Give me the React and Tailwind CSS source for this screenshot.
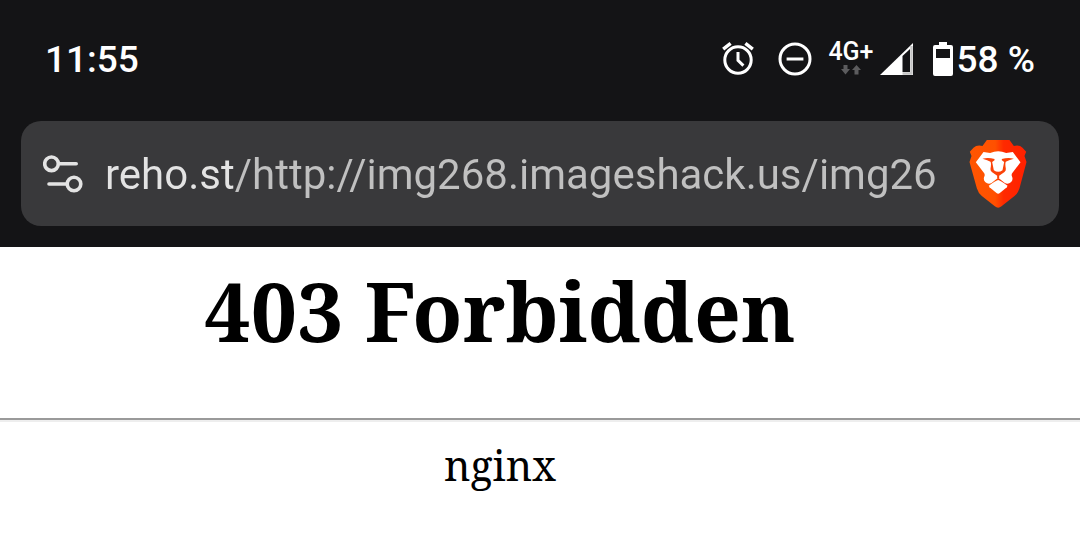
import { useState } from "react";

function AlarmIcon() {
  return (
    <svg className="w-8 h-[34px]" viewBox="0 0 32 34" fill="none" stroke="white">
      <circle cx="16" cy="18" r="13.2" strokeWidth="3" />
      <path d="M1.2 7.2L8.6 1.4M30.8 7.2L23.4 1.4" strokeWidth="3.4" />
      <path d="M16 10V18.4L21.4 23.6" strokeWidth="3" />
    </svg>
  );
}

function DoNotDisturbIcon() {
  return (
    <svg className="w-[34px] h-[34px]" viewBox="0 0 34 34" fill="none" stroke="white" strokeWidth="3">
      <circle cx="17" cy="17" r="15" />
      <path d="M8.6 17H25.4" />
    </svg>
  );
}

function DataArrowsIcon() {
  return (
    <svg className="w-5 h-[10px]" viewBox="0 0 20 10" fill="#5c5c5e">
      <path d="M2.5 0H6.5V4H9L4.5 9.5L0 4H2.5Z" />
      <path d="M13.5 9.5H17.5V5H20L15.5 0L11 5H13.5Z" />
    </svg>
  );
}

function SignalIcon() {
  return (
    <svg className="w-[33px] h-8" viewBox="0 0 33 32">
      <path d="M0 32L33 0V32Z" fill="white" />
      <path d="M22.5 13L30 6V29H22.5Z" fill="#141416" />
      <path d="M31.5 3V30.5H22.5" fill="none" stroke="#c4c4c4" strokeWidth="2.4" />
    </svg>
  );
}

function BatteryIcon() {
  return (
    <svg className="w-5 h-[34px]" viewBox="0 0 20 34">
      <path d="M6 0H14V3H18Q20 3 20 5V32Q20 34 18 34H2Q0 34 0 32V5Q0 3 2 3H6Z" fill="white" />
      <path d="M3 7H17V16H3Z" fill="#141416" />
    </svg>
  );
}

function TuneIcon() {
  return (
    <svg className="w-10 h-[38px]" viewBox="0 0 40 38" fill="none" stroke="#e3e3e3" strokeWidth="3.6" strokeLinecap="round">
      <circle cx="8.5" cy="8.8" r="6.8" />
      <path d="M16 8.8H33.2" />
      <circle cx="31" cy="29" r="6.8" />
      <path d="M6 29H23.5" />
    </svg>
  );
}

function BraveLogo() {
  return (
    <svg className="w-[58px] h-[68px]" viewBox="87 90 173 204">
      <defs>
        <linearGradient id="shield" x1="0" x2="1" y1="0" y2="0">
          <stop offset="0" stopColor="#ff5601" />
          <stop offset="0.45" stopColor="#ff5000" />
          <stop offset="0.6" stopColor="#ff2a00" />
          <stop offset="1" stopColor="#ff2000" />
        </linearGradient>
      </defs>
      <path
        d="M140 90H208L221 108Q238 104 247 113L258 125L253 138L259 156L238 235Q234 249 223 258L184 289Q174 297 164 289L125 258Q114 249 110 235L88 156L94 138L89 125L100 113Q110 104 127 108Z"
        fill="url(#shield)"
      />
      {/* mane and muzzle */}
      <path
        d="M130 126L150 129Q174 118 198 129L218 126L241 157L217 188Q213 193 215 198Q220 209 213 216Q204 224 194 219L174 203L154 219Q144 224 135 216Q128 209 133 198Q135 193 131 188L107 157Z"
        fill="white"
      />
      {/* eyes and the sides of the nose */}
      <path
        d="M127 146Q144 141 163 147L163 151L156 156L161 181Q174 190 187 181L192 156L185 151L185 147Q204 141 221 146L207 151L197 155Q194 160 197 176Q198 182 193 186L177 197V205H171V197L155 186Q150 182 151 176Q154 160 151 155L141 151Z"
        fill="#fa4208"
      />
      {/* chin */}
      <path d="M174 210Q180 211 200 226Q203 229 200 232L179 249Q174 253 169 249L148 232Q145 229 148 226Q168 211 174 210Z" fill="white" />
    </svg>
  );
}

export default function App() {
  const [url, setUrl] = useState("reho.st/http://img268.imageshack.us/img26");

  return (
    <div className="min-h-screen bg-white">
      <header className="bg-[#141416] px-[21px] pb-[21px] font-[Roboto,sans-serif] text-white">
        {/* Status bar */}
        <div className="flex h-[121px] items-center justify-between pb-1 px-6 text-[37px] font-medium">
          <time className="pt-0.5">11:55</time>
          <div className="flex items-center">
            <AlarmIcon />
            <div className="ml-6">
              <DoNotDisturbIcon />
            </div>
            <div className="ml-4 flex flex-col items-center pb-1">
              <span className="text-[25px] leading-[26px]">4G+</span>
              <DataArrowsIcon />
            </div>
            <div className="ml-1.5">
              <SignalIcon />
            </div>
            <div className="ml-5 mr-1">
              <BatteryIcon />
            </div>
            <span className="pt-0.5">58 %</span>
          </div>
        </div>

        {/* Address bar */}
        <div className="flex h-[105px] items-center rounded-[20px] bg-[#39393b] pl-[22px] pr-8">
          <button aria-label="Site settings">
            <TuneIcon />
          </button>
          <input
            type="text"
            aria-label="Address"
            value={url}
            onChange={(e) => setUrl(e.target.value)}
            className="ml-[22px] mr-6 min-w-0 flex-1 bg-linear-to-r from-[#e3e3e3] from-[129px] to-[#c0c0c0] to-[129px] bg-clip-text pt-0.5 text-[42px] text-transparent caret-white outline-none"
          />
          <button aria-label="Brave Shields">
            <BraveLogo />
          </button>
        </div>
      </header>

      <main className="font-['Noto_Serif','Droid_Serif','DejaVu_Serif',serif] text-black">
        <h1 className="pr-20 text-center text-[82px] font-bold leading-[126px]">403 Forbidden</h1>
        <hr className="mt-[45px] h-1 border-x-0 border-t-2 border-b-2 border-t-[#9a9a9a] border-b-[#eeeeee]" />
        <p className="mt-3 pr-20 text-center text-[41px] leading-[62px]">nginx</p>
      </main>
    </div>
  );
}
